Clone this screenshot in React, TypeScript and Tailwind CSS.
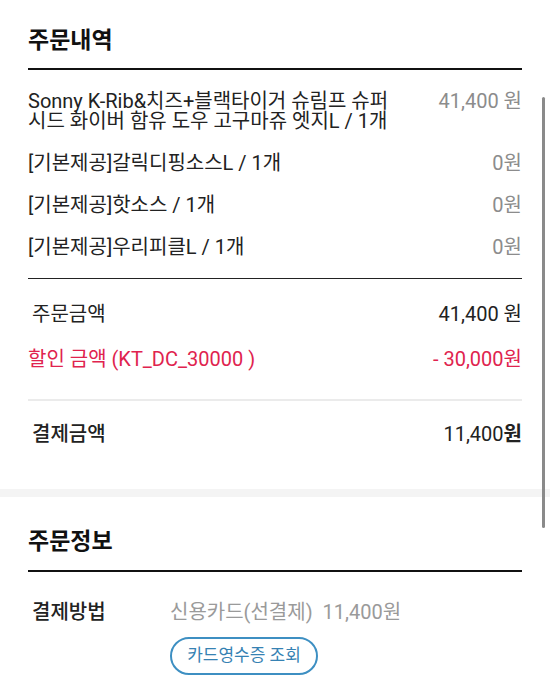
import React from 'react';

const items = [
  { name: 'Sonny K-Rib&치즈+블랙타이거 슈림프 슈퍼 시드 화이버 함유 도우 고구마쥬 엣지L / 1개', price: '41,400 원' },
  { name: '[기본제공]갈릭디핑소스L / 1개', price: '0원' },
  { name: '[기본제공]핫소스 / 1개', price: '0원' },
  { name: '[기본제공]우리피클L / 1개', price: '0원' },
];

const App: React.FC = () => {
  return (
    <div
      className="relative w-[550px] h-[694px] overflow-hidden bg-white text-[#222]"
      style={{ fontFamily: "Roboto, 'Noto Sans CJK KR', sans-serif" }}
    >
      {/* 주문내역 */}
      <section className="px-[28px] pt-[24px]">
        <h2 className="text-[23px] leading-[34px] font-bold text-[#111] pb-[10px] border-b-2 border-[#111]">
          주문내역
        </h2>

        <div className="pt-[21px] pb-[21px] flex flex-col gap-[22px] border-b border-[#222]">
          {items.map((item) => (
            <div key={item.name} className="flex justify-between items-start gap-4 text-[20px] leading-[20px]">
              <p className="max-w-[400px] break-keep">{item.name}</p>
              <span className="text-[#8c8c8c] whitespace-nowrap">{item.price}</span>
            </div>
          ))}
        </div>

        <div className="pt-[25px] pb-[30px] flex flex-col gap-[25px] border-b-2 border-[#ebebeb] text-[20px] leading-[20px]">
          <div className="flex justify-between">
            <span className="pl-[4px]">주문금액</span>
            <span>41,400 원</span>
          </div>
          <div className="flex justify-between text-[#e0234e]">
            <span>할인 금액 (KT_DC_30000 )</span>
            <span>- 30,000원</span>
          </div>
        </div>

        <div className="pt-[23px] pb-[45px] flex justify-between text-[20px] leading-[20px]">
          <span className="font-medium pl-[4px]">결제금액</span>
          <span>
            11,400<span className="font-bold">원</span>
          </span>
        </div>
      </section>

      <div className="h-[8px] bg-[#f4f4f4]" />

      {/* 주문정보 */}
      <section className="px-[28px] pt-[28px]">
        <h2 className="text-[23px] leading-[34px] font-bold text-[#111] pb-[11px] border-b-2 border-[#111]">
          주문정보
        </h2>
        <div className="pt-[28px] flex">
          <span className="w-[142px] pl-[4px] text-[20px] leading-[24px] font-medium">결제방법</span>
          <div className="flex flex-col items-start">
            <span className="text-[20px] leading-[24px] text-[#9a9a9a]">
              신용카드(선결제)&nbsp;&nbsp;11,400원
            </span>
            <button className="mt-[13px] h-[38px] w-[148px] rounded-full border-2 border-[#3d8fc2] text-[17px] text-[#3682b3]">
              카드영수증 조회
            </button>
          </div>
        </div>
      </section>

      {/* scrollbar */}
      <div className="absolute right-[5px] top-[97px] w-[3px] h-[431px] rounded-full bg-[#8a8a8a]" />
    </div>
  );
};

export default App;
